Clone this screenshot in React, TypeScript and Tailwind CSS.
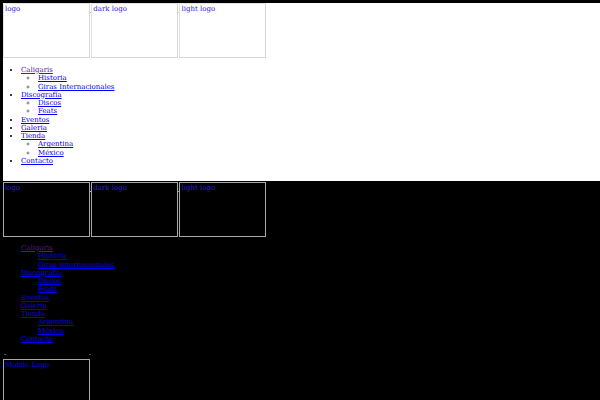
import React from 'react';

type Item = { label: string; visited?: boolean; children?: string[] };

const menu: Item[] = [
  { label: 'Caligaris', visited: true, children: ['Historia', 'Giras Internacionales'] },
  { label: 'Discografía', children: ['Discos', 'Feats'] },
  { label: 'Eventos' },
  { label: 'Galeria' },
  { label: 'Tienda', children: ['Argentina', 'México'] },
  { label: 'Contacto' },
];

// broken image placeholder: bordered box with the alt text at the top
function LogoBox({ alt, dark }: { alt: string; dark?: boolean }) {
  return (
    <span
      className={
        'inline-block align-baseline w-[87px] h-[55px] border px-[1px] text-left [word-spacing:normal] ' +
        (dark ? 'border-[#a8a8a8]' : 'border-[#e2e2e2] border-r-[#d6d6d6] border-b-[#d6d6d6]')
      }
    >
      <span className="block leading-[9px] pt-[1px] text-[#2a22d0]">{alt}</span>
    </span>
  );
}

function Logos({ dark }: { dark?: boolean }) {
  return (
    <div className="leading-[8px] whitespace-nowrap [word-spacing:-1px]">
      <a href="#" className="underline decoration-[#bbb]">
        <LogoBox alt="logo" dark={dark} />{' '}
      </a>
      <a href="#" className="underline decoration-[#bbb]">
        <LogoBox alt="dark logo" dark={dark} />{' '}
      </a>
      <a href="#" className="underline decoration-[#bbb]">
        <LogoBox alt="light logo" dark={dark} />
      </a>
    </div>
  );
}

function Menu({ dark }: { dark?: boolean }) {
  return (
    <ul className="list-disc pl-[18px] text-black">
      {menu.map((item) => (
        <li key={item.label}>
          <a
            href="#"
            className={'underline ' + (item.visited ? 'text-[#551a8b]' : 'text-[#0000ee]')}
          >
            {item.label}
          </a>
          {item.children && (
            <ul className={'list-[circle] pl-[17px] ' + (dark ? 'marker:text-black' : 'marker:text-[#777]')}>
              {item.children.map((c) => (
                <li key={c}>
                  <a href="#" className="underline text-[#0000ee]">
                    {c}
                  </a>
                </li>
              ))}
            </ul>
          )}
        </li>
      ))}
    </ul>
  );
}

export default function App() {
  return (
    <div className="w-[600px] h-[400px] overflow-hidden bg-black pt-[3px] pl-[3px] font-['DejaVu_Serif',serif] text-[7px] leading-[8.27px]">
      {/* light header */}
      <header className="bg-white h-[178px]">
        <Logos />
        <nav className="mt-[8px]">
          <Menu />
        </nav>
      </header>

      {/* dark header */}
      <header className="bg-black pt-[1px]">
        <Logos dark />
        <nav className="mt-[7px]">
          <Menu dark />
        </nav>
        <div className="relative mt-[16px]">
          <span className="absolute -top-[5px] left-[1px] w-[2px] h-[1px] bg-[#555]"></span>
          <span className="absolute -top-[5px] left-[86px] w-[2px] h-[1px] bg-[#555]"></span>
          <a href="#">
            <span className="inline-block w-[87px] h-[54px] border border-[#a8a8a8] px-[1px]">
              <span className="block leading-[9px] pt-[1px] text-[#0000ee]">Mobile Logo</span>
            </span>
          </a>
        </div>
      </header>
    </div>
  );
}
